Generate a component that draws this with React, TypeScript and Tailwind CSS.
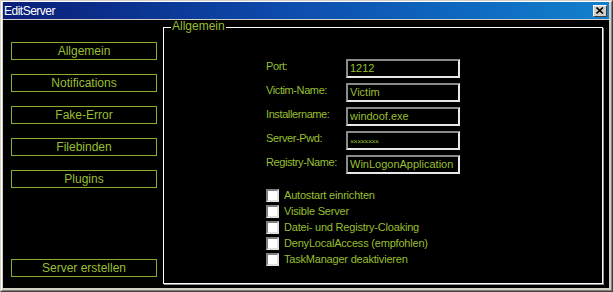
const green = 'text-[#98bf2f]';

const navItems = ['Allgemein', 'Notifications', 'Fake-Error', 'Filebinden', 'Plugins'];

const fields = [
  { label: 'Port:', value: '1212' },
  { label: 'Victim-Name:', value: 'Victim' },
  { label: 'Installername:', value: 'windoof.exe' },
  { label: 'Server-Pwd:', value: '××××××××', small: true },
  { label: 'Registry-Name:', value: 'WinLogonApplication' },
];

const options = [
  'Autostart einrichten',
  'Visible Server',
  'Datei- und Registry-Cloaking',
  'DenyLocalAccess (empfohlen)',
  'TaskManager deaktivieren',
];

function NavButton({ label }: { label: string }) {
  return (
    <div className={`w-[146px] h-[18px] border border-[#8cae2c] flex items-center justify-center text-[12px] leading-none ${green}`}>
      {label}
    </div>
  );
}

export default function App() {
  return (
    <div
      className="w-[613px] h-[292px] border border-t-[#d4d0c8] border-l-[#d4d0c8] border-r-[#404040] border-b-[#404040]"
      style={{ fontFamily: '"Liberation Sans", Arial, sans-serif' }}
    >
      <div className="h-full flex flex-col bg-[#d4d0c8] border border-t-white border-l-white border-r-[#808080] border-b-[#808080] pl-px pr-[2px] pb-[2px]">
        {/* Title bar */}
        <div className="h-[17px] shrink-0 flex items-center justify-between bg-gradient-to-r from-[#0a1e78] via-[#0e4fb0] to-[#1380cc] pl-[1px] pr-[2px]">
          <span className="text-white text-[12px] tracking-[-0.5px] leading-none">EditServer</span>
          <div className="w-[14px] h-[12px] bg-[#d4d0c8] border border-t-white border-l-white border-r-[#404040] border-b-[#404040] flex items-center justify-center">
            <svg width="8" height="7" viewBox="0 0 8 7">
              <path d="M0.5 0.5 L7 6.5 M7 0.5 L0.5 6.5" stroke="#000" strokeWidth="1.6" />
            </svg>
          </div>
        </div>

        {/* Client area */}
        <div className="flex-1 mt-px bg-black flex">
          <div className="w-[160px] shrink-0 flex flex-col pl-[8px] pt-[22px] pb-[11px]">
            <div className="flex flex-col gap-[14px]">
              {navItems.map((item) => (
                <NavButton key={item} label={item} />
              ))}
            </div>
            <div className="mt-auto">
              <NavButton label="Server erstellen" />
            </div>
          </div>

          <div className="relative w-[440px] mt-[7px] mb-[4px] border border-white shadow-[1px_1px_0_#909090]">
            <span className={`absolute -top-[8px] left-[7px] bg-black px-px text-[12px] leading-none ${green}`}>
              Allgemein
            </span>

            <div className="pl-[102px] pt-[31px] flex flex-col gap-[5px]">
              {fields.map((f) => (
                <div key={f.label} className="flex items-start">
                  <span className={`w-[80px] text-[11px] tracking-[-0.4px] leading-none pt-[2px] ${green}`}>{f.label}</span>
                  <div className="w-[114px] h-[19px] border-2 border-t-[#8a8a8a] border-l-[#8a8a8a] border-r-[#e8e8e8] border-b-[#e8e8e8] flex items-center pl-[2px]">
                    <span className={`${f.small ? 'text-[7px] tracking-[-0.5px] pt-px' : 'text-[11px]'} leading-none ${green}`}>
                      {f.value}
                    </span>
                  </div>
                </div>
              ))}
            </div>

            <div className="pl-[102px] mt-[15px] flex flex-col">
              {options.map((o) => (
                <div key={o} className="h-[16px] flex items-start">
                  <div className="w-[13px] h-[13px] bg-white border-2 border-t-[#808080] border-l-[#808080] border-r-[#e0e0e0] border-b-[#e0e0e0]" />
                  <span className={`ml-[5px] text-[11px] tracking-[-0.2px] leading-[13px] ${green}`}>{o}</span>
                </div>
              ))}
            </div>
          </div>
        </div>
      </div>
    </div>
  );
}
